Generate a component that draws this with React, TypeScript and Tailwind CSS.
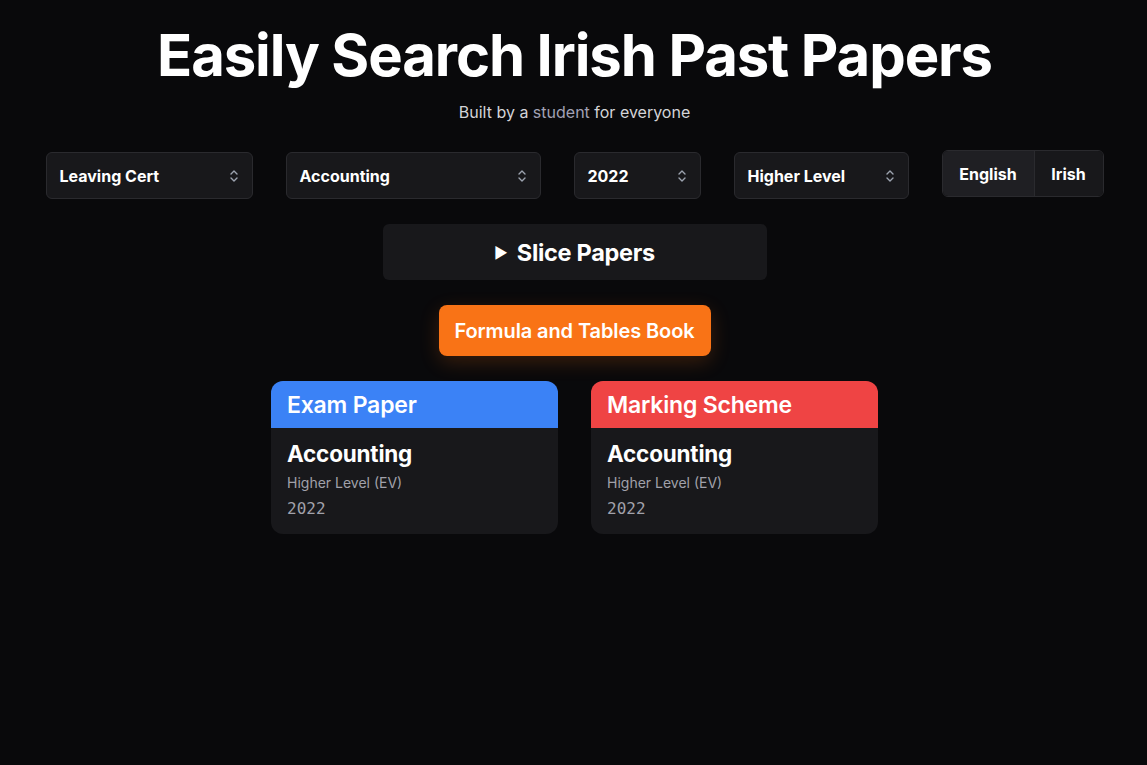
import React from "react";

function Chevrons() {
  return (
    <svg width="10" height="16" viewBox="0 0 10 16" fill="none" stroke="#9ca3af" strokeWidth="1.4" strokeLinecap="round" strokeLinejoin="round">
      <path d="M2 6 L5 3 L8 6" />
      <path d="M2 10 L5 13 L8 10" />
    </svg>
  );
}

function Select({ label, width }: { label: string; width: string }) {
  return (
    <div className={`flex items-center justify-between h-[47px] rounded-md border border-[#2a2a2e] bg-[#18181b] pl-[13px] pr-[13px] ${width}`}>
      <span className="text-[16px] font-bold text-white pt-[1px]">{label}</span>
      <Chevrons />
    </div>
  );
}

function Card({ title, color }: { title: string; color: string }) {
  return (
    <div className="w-[287px] rounded-xl overflow-hidden bg-[#18181b]">
      <div className={`h-[47px] flex items-center px-4 pt-[2px] ${color}`}>
        <span className="text-[23px] font-semibold text-white tracking-[-0.2px]">{title}</span>
      </div>
      <div className="px-4 pt-[11px] pb-[15px]">
        <div className="text-[22.5px] font-bold text-white leading-[30px] tracking-[-0.2px]">Accounting</div>
        <div className="text-[14px] text-[#a1a1aa] mt-[5px] leading-[18px]">Higher Level (EV)</div>
        <div className="text-[16px] text-[#a1a1aa] mt-[7px] leading-[20px]" style={{ fontFamily: "'DejaVu Sans Mono', 'Liberation Mono', monospace" }}>2022</div>
      </div>
    </div>
  );
}

export default function App() {
  return (
    <div className="min-h-[765px] w-full bg-[#09090b] flex flex-col items-center" style={{ fontFamily: "Inter, 'Noto Sans', sans-serif" }}>
      <h1 className="mt-[20px] text-[58px] font-bold text-white leading-[70px] tracking-[-1.1px] pl-[2px]">Easily Search Irish Past Papers</h1>
      <p className="mt-[10px] text-[16px] text-[#d4d4d8] leading-[24px] pl-[2px]">
        Built by a <span className="text-[#a1a1b5]">student</span> for everyone
      </p>
      <div className="mt-[28px] flex items-start gap-[33px] pl-[2px]">
        <Select label="Leaving Cert" width="w-[207px]" />
        <Select label="Accounting" width="w-[255px]" />
        <Select label="2022" width="w-[127px]" />
        <Select label="Higher Level" width="w-[175px]" />
        <div className="-mt-[2px] flex h-[47px] rounded-md border border-[#2a2a2e] overflow-hidden">
          <div className="flex items-center pt-[1px] bg-[#1f1f23] text-[16px] font-bold text-white w-[92px] justify-center border-r border-[#2a2a2e]">English</div>
          <div className="flex items-center pt-[1px] bg-[#18181b] text-[16px] font-bold text-white w-[68px] justify-center">Irish</div>
        </div>
      </div>
      <div className="mt-[25px] ml-[2px] w-[384px] h-[56px] rounded-md bg-[#18181b] flex items-center justify-center gap-[9px] pt-[2px]">
        <span className="text-[15px] text-white">►</span>
        <span className="text-[23.5px] font-bold text-white tracking-[-0.3px]">Slice Papers</span>
      </div>
      <div className="mt-[25px] ml-[2px] w-[272px] h-[51px] rounded-lg bg-[#f97316] flex items-center justify-center shadow-[0_6px_20px_rgba(249,115,22,0.2)]">
        <span className="text-[20px] font-semibold text-white tracking-[-0.1px]">Formula and Tables Book</span>
      </div>
      <div className="mt-[25px] flex gap-[33px] pl-[2px]">
        <Card title="Exam Paper" color="bg-[#3b82f6]" />
        <Card title="Marking Scheme" color="bg-[#ef4444]" />
      </div>
    </div>
  );
}
